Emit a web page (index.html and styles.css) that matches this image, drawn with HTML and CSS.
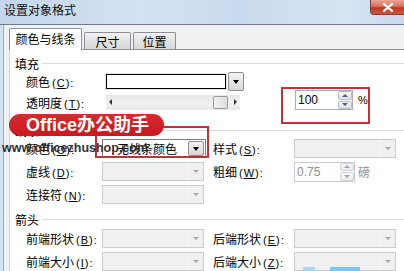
FILE: index.html
```html
<!DOCTYPE html>
<html lang="zh-CN">
<head>
<meta charset="utf-8">
<title>设置对象格式</title>
<link rel="stylesheet" href="styles.css">
</head>
<body>
<div class="titlebar">
  <span class="title">设置对象格式</span>
  <div class="close"><svg width="12" height="9" viewBox="0 0 12 9"><path d="M2 1.2 L10 7.8 M10 1.2 L2 7.8" stroke="#fff" stroke-width="2.2" stroke-linecap="round"/></svg></div>
</div>
<div class="window">
  <div class="frame"></div>
  <div class="main">
    <div class="tabs">
      <div class="tab sel">颜色与线条</div>
      <div class="tab t2">尺寸</div>
      <div class="tab t3">位置</div>
    </div>
    <div class="pane">
      <div class="ghead"><span>填充</span></div>
      <div class="fill">
        <div class="frow r1">
          <span class="lbl">颜色<span class="k">(<u>C</u>):</span></span>
          <div class="colorbox"></div>
          <div class="btn"><i class="tri"></i></div>
        </div>
        <div class="frow r2">
          <span class="lbl">透明度<span class="k">(<u>T</u>):</span></span>
          <div class="slider">
            <i class="sarr l"></i>
            <div class="thumb"></div>
            <i class="sarr r"></i>
          </div>
          <div class="spin">
            <span class="val">100</span>
            <div class="spinbtn"><b><i class="up"></i></b><b><i class="dn"></i></b></div>
          </div>
          <span class="pct">%</span>
        </div>
      </div>
      <div class="ghead g2"><span>线条</span></div>
      <div class="lgrid l1">
        <span class="lbl">颜色<span class="k">(<u>O</u>):</span></span>
        <div class="dd on"><span class="ddtext">无线条颜色</span><b class="ddb"><i class="tri"></i></b></div>
        <span class="lbl rl">样式<span class="k">(<u>S</u>):</span></span>
        <div class="dd off"><b class="ddb"><i class="tri"></i></b></div>

        <span class="lbl">虚线<span class="k">(<u>D</u>):</span></span>
        <div class="dd off"><b class="ddb"><i class="tri"></i></b></div>
        <span class="lbl rl">粗细<span class="k">(<u>W</u>):</span></span>
        <div class="wrow">
          <div class="spin dis">
            <span class="val">0.75</span>
            <div class="spinbtn"><b><i class="up"></i></b><b><i class="dn"></i></b></div>
          </div>
          <span class="unit">磅</span>
        </div>

        <span class="lbl">连接符<span class="k">(<u>N</u>):</span></span>
        <div class="dd off"><b class="ddb"><i class="tri"></i></b></div>
        <span></span>
        <span></span>
      </div>
      <div class="ghead g3"><span>箭头</span></div>
      <div class="lgrid l2">
        <span class="lbl">前端形状<span class="k">(<u>B</u>):</span></span>
        <div class="dd off"><b class="ddb"><i class="tri"></i></b></div>
        <span class="lbl rl">后端形状<span class="k">(<u>E</u>):</span></span>
        <div class="dd off"><b class="ddb"><i class="tri"></i></b></div>

        <span class="lbl">前端大小<span class="k">(<u>I</u>):</span></span>
        <div class="dd off"><b class="ddb"><i class="tri"></i></b></div>
        <span class="lbl rl">后端大小<span class="k">(<u>Z</u>):</span></span>
        <div class="dd off"><b class="ddb"><i class="tri"></i></b></div>
      </div>
    </div>
  </div>
</div>

<div class="mark-box m1"></div>
<div class="mark-box m2"></div>
<div class="banner">Office办公助手</div>
<div class="site">www.officezhushop.com</div>
<div class="blue b1"></div>
<div class="blue b2"></div>
</body>
</html>
```

FILE: styles.css
```css
* { box-sizing: border-box; }
html, body { margin: 0; padding: 0; }
body {
  width: 404px;
  height: 271px;
  overflow: hidden;
  position: relative;
  background: #f0f0f0;
  font-family: "Noto Sans CJK SC", sans-serif;
  font-size: 12px;
  color: #000;
}

/* title bar */
.titlebar {
  height: 25px;
  display: flex;
  align-items: flex-start;
  background: linear-gradient(90deg, #c3d6eb 0%, #d3e2f2 35%, #c9dbee 60%, #d6e4f3 85%, #c8daee 100%);
  border-bottom: 1px solid #6f7c8b;
}
.title {
  line-height: 20px;
  padding-left: 4px;
  color: #111;
}
.close {
  margin-left: auto;
  width: 34px;
  height: 15px;
  display: flex;
  align-items: center;
  justify-content: center;
  background: linear-gradient(#e9a595 0%, #d8715d 45%, #c2391f 55%, #c95a40 100%);
  border-left: 1px solid #8a3b30;
  border-bottom: 1px solid #8a3b30;
  border-radius: 0 0 0 4px;
}

/* window body */
.window {
  display: flex;
  height: 246px;
}
.frame {
  width: 4px;
  background: #d3e0ee;
  border-right: 1px solid #a3adb8;
}
.main {
  flex: 1;
  padding-left: 5px;
  display: flex;
  flex-direction: column;
}
.tabs {
  height: 27px;
  display: flex;
  align-items: flex-end;
  gap: 2px;
}
.tab {
  height: 17px;
  border: 1px solid #8c8f98;
  border-bottom: 0;
  background: linear-gradient(#f4f4f4, #e2e2e2 50%, #d8d8d8);
  display: flex;
  align-items: center;
  justify-content: center;
  border-radius: 2px 2px 0 0;
}
.tab.sel {
  width: 73px;
  height: 22px;
  margin-bottom: -1px;
  background: #fff;
  position: relative;
  z-index: 1;
  padding-bottom: 2px;
}
.tab.t2 { width: 47px; }
.tab.t3 { width: 43px; }

.pane {
  flex: 1;
  background: #fff;
  border-top: 1px solid #8c8f98;
  border-left: 1px solid #d4d4d4;
  padding: 5px 0 0 5px;
}

/* group header */
.ghead {
  height: 16px;
  display: flex;
  align-items: center;
  gap: 3px;
}
.ghead::after {
  content: "";
  flex: 1;
  height: 1px;
  background: #d5dfe5;
}
.ghead.g2 { margin-top: 11px; }
.ghead.g3 { margin-top: 7px; }

.lbl { white-space: nowrap; }
.k {
  font-family: "Liberation Sans", sans-serif;
  font-size: 11px;
  letter-spacing: 1px;
  padding-left: 2px;
}

/* fill */
.fill { padding-left: 11px; margin-top: 1px; }
.frow {
  display: flex;
  align-items: center;
}
.frow .lbl { width: 80px; }
.frow.r1 { height: 19px; }
.frow.r2 { height: 18px; margin-top: 2px; }

.colorbox {
  width: 120px;
  height: 15px;
  border: 1px solid #000;
  background: #fff;
  outline: 1px solid #e4e4e4;
}
.btn {
  width: 16px;
  height: 19px;
  margin-left: 2px;
  border: 1px solid #8e8f8f;
  border-radius: 2px;
  background: linear-gradient(#f4f4f4, #e6e6e6 50%, #d6d6d6);
  display: flex;
  align-items: center;
  justify-content: center;
}
.tri {
  display: block;
  width: 0;
  height: 0;
  border-left: 3.5px solid transparent;
  border-right: 3.5px solid transparent;
  border-top: 4px solid #000;
}

.slider {
  width: 134px;
  height: 15px;
  background: linear-gradient(#e6e6e6, #f2f2f2 50%, #e9e9e9);
  display: flex;
  align-items: center;
  padding: 0 3px 0 3px;
}
.sarr {
  display: block;
  width: 0;
  height: 0;
  border-top: 3px solid transparent;
  border-bottom: 3px solid transparent;
}
.sarr.l { border-right: 3px solid #333; }
.sarr.r { border-left: 3px solid #333; margin-left: 6px; }
.thumb {
  margin-left: auto;
  width: 15px;
  height: 13px;
  border: 1px solid #979797;
  border-radius: 2px;
  background: linear-gradient(90deg, #f3f3f3, #dcdcdc);
}

.spin {
  display: flex;
  height: 20px;
  border: 1px solid #abadb3;
  background: #fff;
}
.r2 .spin {
  margin-left: 55px;
  margin-bottom: 4px;
}
.spin .val {
  width: 41px;
  font-family: "Liberation Sans", sans-serif;
  font-size: 12px;
  line-height: 18px;
  padding-left: 2px;
}
.spinbtn {
  width: 15px;
  display: flex;
  flex-direction: column;
  gap: 1px;
  padding: 0 0 0 1px;
}
.spinbtn b {
  flex: 1;
  display: flex;
  align-items: center;
  justify-content: center;
  border: 1px solid #b8bcc3;
  border-radius: 2px;
  background: linear-gradient(#f6f7f9, #dfe3e8);
}
.up, .dn {
  display: block;
  width: 0;
  height: 0;
  border-left: 3px solid transparent;
  border-right: 3px solid transparent;
}
.up { border-bottom: 3px solid #4e5f7c; }
.dn { border-top: 3px solid #4e5f7c; }
.pct {
  margin-left: 5px;
  margin-bottom: 4px;
  font-family: "Liberation Sans", sans-serif;
  font-size: 11px;
}

/* line & arrow grids */
.lgrid {
  display: grid;
  grid-template-columns: 76px 104px 88px 102px;
  grid-auto-rows: 19px;
  row-gap: 4px;
  align-items: center;
  padding-left: 11px;
}
.lgrid.l1 { margin-top: 1px; }
.lgrid.l2 { margin-top: 2px; }
.rl { padding-left: 7px; }

.dd {
  height: 19px;
  display: flex;
  align-items: stretch;
}
.dd.off {
  width: 102px;
  background: #f0f0f0;
  border: 1px solid #cbcbcb;
  justify-content: flex-end;
}
.dd.off .ddb {
  width: 16px;
  display: flex;
  align-items: center;
  justify-content: center;
  border-left: 1px solid #f8f8f8;
}
.dd.off .tri { border-top-color: #a8a8a8; border-left-width: 3px; border-right-width: 3px; border-top-width: 3px; }
.dd.on {
  width: 104px;
  background: #fff;
  border: 1px solid #7e7e7e;
  padding: 1px;
}
.ddtext {
  flex: 1;
  padding-left: 13px;
  line-height: 15px;
}
.dd.on .ddb {
  width: 16px;
  display: flex;
  align-items: center;
  justify-content: center;
  border: 1px solid #8e8f8f;
  border-radius: 2px;
  background: linear-gradient(#f4f4f4, #e6e6e6 50%, #d6d6d6);
}

.wrow {
  display: flex;
  align-items: center;
}
.spin.dis {
  height: 20px;
  border-color: #c9cbd0;
}
.spin.dis .val { width: 44px; color: #8d8d8d; }
.spin.dis .spinbtn b { border-color: #cfd2d7; background: linear-gradient(#f7f7f7, #ebebeb); }
.spin.dis .up { border-bottom-color: #a0a6b0; }
.spin.dis .dn { border-top-color: #a0a6b0; }
.unit { margin-left: 3px; color: #8d8d8d; }

/* watermark overlays */
.mark-box {
  position: absolute;
  border: 2px solid #b9353b;
}
.mark-box.m1 { left: 281px; top: 87px; width: 89px; height: 37px; }
.mark-box.m2 { left: 95px; top: 126px; width: 114px; height: 32px; }
.banner {
  position: absolute;
  left: 9px;
  top: 114px;
  width: 155px;
  height: 22px;
  border-radius: 11px;
  background: linear-gradient(#d82a2f, #c41a20);
  color: #fff;
  font-family: "Liberation Sans", "Noto Sans CJK SC", sans-serif;
  font-weight: 700;
  font-size: 18px;
  line-height: 22px;
  padding-left: 17px;
  white-space: nowrap;
}
.site {
  position: absolute;
  left: 2px;
  top: 141px;
  font-family: "Liberation Sans", sans-serif;
  font-weight: 700;
  font-size: 12.5px;
  line-height: 14px;
  color: #333;
  white-space: nowrap;
}
.blue {
  position: absolute;
  top: 267px;
  height: 4px;
}
.blue.b1 { left: 303px; width: 12px; background: #a9d4ee; }
.blue.b2 { left: 330px; width: 30px; background: #7cc6ef; }
```
